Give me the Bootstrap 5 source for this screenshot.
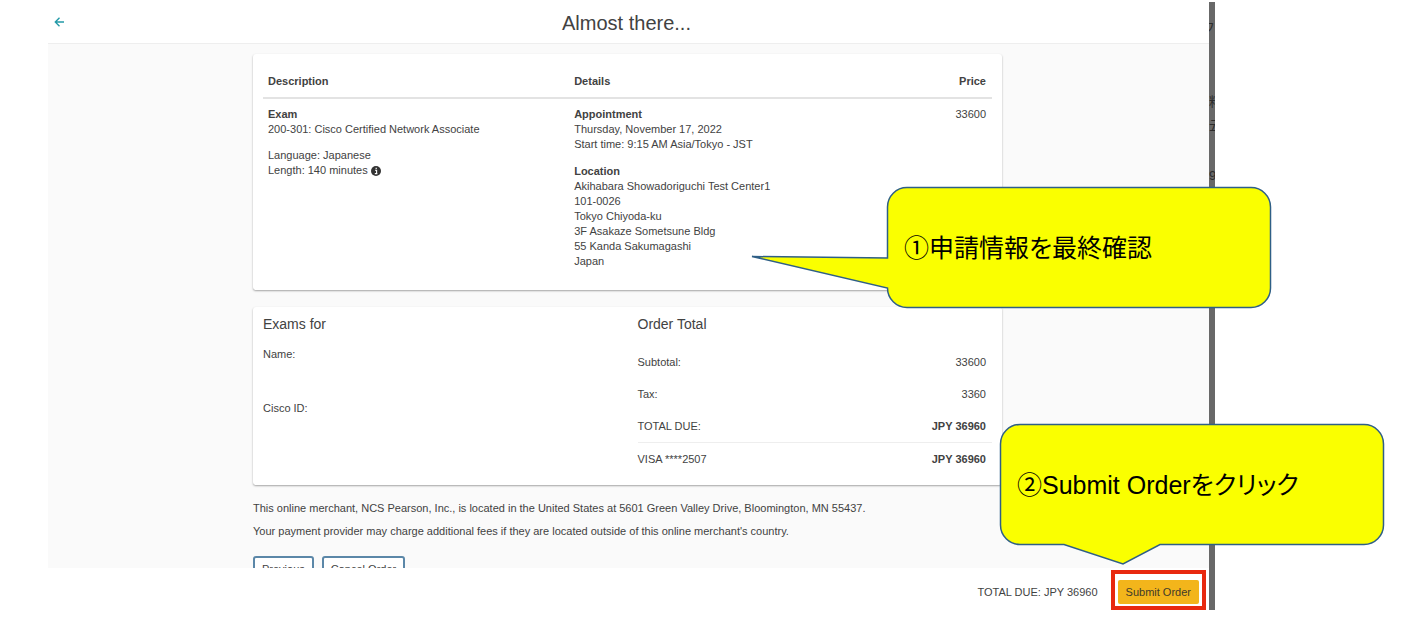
<!DOCTYPE html>
<html lang="en">
<head>
<meta charset="utf-8">
<meta name="viewport" content="width=device-width, initial-scale=1">
<title>Almost there...</title>
<link href="https://cdn.jsdelivr.net/npm/bootstrap@5.3.0/dist/css/bootstrap.min.css" rel="stylesheet">
<style>
  body { font-family: "Liberation Sans", "Noto Sans CJK JP", sans-serif; font-size: 11px; line-height: 16px; color: #424242; background: #fff; overflow-x: hidden; }
  .slide { padding: 2px 191px 0 48px; }
  .window { height: calc(100vh - 25px); }
  .topbar { height: 42px; border-bottom: 1px solid #eee; }
  .topbar h1 { font-size: 20px; line-height: 24px; font-weight: 400; }
  .back-link { left: 6px; top: 14px; width: 12px; height: 12px; }
  .page-body { background: #fafafa; padding: 10px 2px 0 0; min-height: 0; }
  .order { max-width: 749px; }
  .panel { background: #fff; border-radius: 3px; box-shadow: 0 1px 2px rgba(0,0,0,.35); padding: 8px 10px; }
  .panel + .panel { margin-top: 17px; padding: 7px 10px; }
  .panel table { color: inherit; }
  .items th, .items td { padding: 7px 5px 8px; vertical-align: top; text-align: left; }
  .items thead th { padding: 11px 5px 8px; border-bottom: 2px solid #e3e3e3; }
  .items .amount, .totals td { text-align: right; padding-right: 6px; }
  .items p, .items address { line-height: 15px; margin-bottom: 11px; }
  .items address { margin-bottom: 5px; }
  .items strong { display: block; line-height: 16px; }
  .col-desc { width: 42%; }
  .panel h2 { font-size: 14px; line-height: 20px; font-weight: 400; margin: 0; }
  .order-total { padding-left: 10px; }
  .totals { margin-top: 12px; margin-bottom: 3px; }
  .totals th { font-weight: 400; }
  .totals th, .totals td { padding-top: 8px; padding-bottom: 8px; padding-left: 0; }
  .totals .paid > * { border-top: 1px solid #eee; }
  .person dt { font-weight: 400; margin-top: 12px; }
  .person dd { height: 26px; margin: 0; }
  .notes { margin-top: 15px; }
  .notes p { margin-bottom: 7px; }
  .actions { margin-top: 17px; }
  .btn-line { font-size: 11px; line-height: 16px; padding: 3px 7px; color: #424242; border: 2px solid #5b87a8; border-radius: 3px; background: #fff; }
  .footbar { height: 42px; padding: 1px 3px 0 0; gap: 13px; }
  .mark-box { border: 4px solid #e8290f; padding: 6px 3px 2px; }
  .btn-submit { font-size: 11px; line-height: 16px; padding: 4px 8px; border: 0; border-radius: 2px; background: #f3b51b; color: #3f3a2a; }
  .edge { width: 6px; padding-top: 16px; background: #686868; color: #2c2c2c; font-size: 13px; line-height: 20px; }
  .edge span { width: 6px; height: 20px; white-space: nowrap; }
  .edge .tail-end { direction: rtl; }
  .edge .far { margin-top: 54px; }
  .edge .near { margin-top: 4px; }
  .edge .mid { margin-top: 30px; }
  .callout { width: 384px; height: 121px; padding-left: 17px; font-size: 25px; line-height: 36px; color: #000; font-feature-settings: "palt"; }
  .callout svg { overflow: visible; z-index: -1; }
  .callout path { fill: #faff00; stroke: #2f5f86; stroke-width: 1.5; }
  .callout-check { right: -56px; top: 185px; z-index: 2; }
  .callout-submit { right: -169px; top: 422px; z-index: 2; }
</style>
</head>
<body>
<div class="slide">
  <div class="window position-relative d-flex">
    <div class="flex-grow-1 d-flex flex-column">
      <header class="topbar position-relative d-flex align-items-center justify-content-center pe-1 flex-shrink-0">
        <a href="#" class="back-link position-absolute d-flex" aria-label="Back">
          <svg width="12" height="12" viewBox="0 0 12 12" fill="none" stroke="#249aa8" stroke-width="1.4"><path d="M10 6H1.5M5.5 1.8L1.3 6l4.2 4.2"/></svg>
        </a>
        <h1 class="m-0">Almost there...</h1>
      </header>

      <main class="page-body flex-grow-1 overflow-hidden">
        <div class="order mx-auto">
          <section class="panel">
            <table class="items w-100">
              <thead>
                <tr><th class="col-desc">Description</th><th>Details</th><th class="amount">Price</th></tr>
              </thead>
              <tbody>
                <tr>
                  <td>
                    <p><strong>Exam</strong>200-301: Cisco Certified Network Associate</p>
                    <p>Language: Japanese<br>Length: 140 minutes
                      <svg width="10" height="10" viewBox="0 0 10 10" role="img" aria-label="Info"><circle cx="5" cy="5" r="5" fill="#333"/><path d="M4 4.300h1.600v3.200M3.800 7.600h2.600M4.600 2.400h1.200" stroke="#fff" stroke-width="1.100" fill="none"/></svg></p>
                  </td>
                  <td>
                    <p><strong>Appointment</strong>Thursday, November 17, 2022<br>Start time: 9:15 AM Asia/Tokyo - JST</p>
                    <address><strong>Location</strong>Akihabara Showadoriguchi Test Center1<br>101-0026<br>Tokyo Chiyoda-ku<br>3F Asakaze Sometsune Bldg<br>55 Kanda Sakumagashi<br>Japan</address>
                  </td>
                  <td class="amount">33600</td>
                </tr>
              </tbody>
            </table>
          </section>

          <section class="panel">
            <div class="row g-0">
              <div class="col-6 person">
                <h2>Exams for</h2>
                <dl class="m-0">
                  <dt>Name:</dt><dd></dd>
                  <dt>Cisco ID:</dt><dd></dd>
                </dl>
              </div>
              <div class="col-6 order-total">
                <h2>Order Total</h2>
                <table class="totals w-100">
                  <tbody>
                    <tr><th>Subtotal:</th><td>33600</td></tr>
                    <tr><th>Tax:</th><td>3360</td></tr>
                    <tr><th>TOTAL DUE:</th><td class="fw-bold">JPY 36960</td></tr>
                    <tr class="paid"><th>VISA ****2507</th><td class="fw-bold">JPY 36960</td></tr>
                  </tbody>
                </table>
              </div>
            </div>
          </section>

          <div class="notes">
            <p>This online merchant, NCS Pearson, Inc., is located in the United States at 5601 Green Valley Drive, Bloomington, MN 55437.</p>
            <p>Your payment provider may charge additional fees if they are located outside of this online merchant's country.</p>
          </div>
          <div class="actions d-flex gap-2">
            <button type="button" class="btn-line">Previous</button>
            <button type="button" class="btn-line">Cancel Order</button>
          </div>
        </div>
      </main>

      <footer class="footbar d-flex align-items-center justify-content-end flex-shrink-0">
        <span class="pt-1">TOTAL DUE: JPY 36960</span>
        <div class="mark-box d-flex"><button type="submit" class="btn-submit">Submit Order</button></div>
      </footer>
    </div>

    <div class="edge overflow-hidden flex-shrink-0 d-flex flex-column" aria-hidden="true">
      <span class="tail-end">フ</span>
      <span class="far">料</span>
      <span class="near">云</span>
      <span class="mid">9</span>
    </div>

    <div class="callout callout-check position-absolute d-flex align-items-center">
      <svg class="position-absolute top-0 start-0" width="384" height="121" viewBox="0 0 384 121" aria-hidden="true"><path d="M20 .5H364A19.500 19.500 0 0 1 383.500 20V101A19.500 19.500 0 0 1 364 120.500H20A19.500 19.500 0 0 1 .5 101L-135 69.500L.5 71V20A19.500 19.500 0 0 1 20 .5Z"/></svg>
      <span>①申請情報を最終確認</span>
    </div>
    <div class="callout callout-submit position-absolute d-flex align-items-center">
      <svg class="position-absolute top-0 start-0" width="384" height="121" viewBox="0 0 384 121" aria-hidden="true"><path d="M20 .5H364A19.500 19.500 0 0 1 383.500 20V101A19.500 19.500 0 0 1 364 120.500H160L123 140L64 120.500H20A19.500 19.500 0 0 1 .5 101V20A19.500 19.500 0 0 1 20 .5Z"/></svg>
      <span>②Submit Orderをクリック</span>
    </div>
  </div>
</div>
<script src="https://cdn.jsdelivr.net/npm/bootstrap@5.3.0/dist/js/bootstrap.bundle.min.js"></script>
</body>
</html>
